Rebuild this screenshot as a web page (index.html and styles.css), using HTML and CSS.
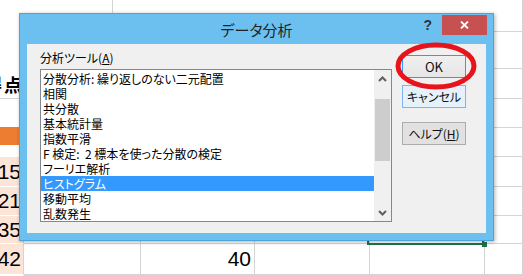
FILE: index.html
```html
<!DOCTYPE html>
<html lang="ja">
<head>
  <meta charset="UTF-8" />
  <title>データ分析</title>
  <link rel="stylesheet" href="styles.css">
</head>
<body>
  <div class="sheet">
    <div class="grid">
      <div class="c a"></div>
      <div class="c wide"><div class="seg"></div></div>
      <div class="c"></div>

      <div class="c a"></div><div class="c"></div><div class="c"></div><div class="c"></div><div class="c"></div><div class="c"></div>
      <div class="c a name">得点</div><div class="c"></div><div class="c"></div><div class="c"></div><div class="c"></div><div class="c"></div>
      <div class="c a"></div><div class="c"></div><div class="c"></div><div class="c"></div><div class="c"></div><div class="c"></div>
      <div class="c a head"><div class="fill"></div></div><div class="c"></div><div class="c"></div><div class="c"></div><div class="c"></div><div class="c"></div>
      <div class="c a num">15</div><div class="c"></div><div class="c"></div><div class="c"></div><div class="c"></div><div class="c"></div>
      <div class="c a num">21</div><div class="c"></div><div class="c"></div><div class="c"></div><div class="c"></div><div class="c"></div>
      <div class="c a num">35</div><div class="c"></div><div class="c"></div><div class="c"></div><div class="c"></div><div class="c"></div>
      <div class="c a num">42</div><div class="c"></div><div class="c val">40</div><div class="c"></div><div class="c"></div><div class="c"></div>
      <div class="c a num"></div><div class="c"></div><div class="c"></div><div class="c"></div><div class="c"></div><div class="c"></div>
    </div>

    <div class="selection"></div>
    <div class="handle"></div>

    <div class="dialog">
      <div class="titlebar">
        <span class="title">データ分析</span>
        <div class="controls">
          <span class="help-mark">?</span>
          <span class="close">
            <svg width="9" height="8" viewBox="0 0 9 8"><path d="M1 0.5 L8 7.5 M8 0.5 L1 7.5" stroke="#fff" stroke-width="1.8" fill="none"/></svg>
          </span>
        </div>
      </div>
      <div class="body">
        <div class="tools">
          <div class="label">分析ツール(<u>A</u>)</div>
          <div class="listbox">
            <ul class="items">
              <li>分散分析: 繰り返しのない二元配置</li>
              <li>相関</li>
              <li>共分散</li>
              <li>基本統計量</li>
              <li>指数平滑</li>
              <li>F 検定:&nbsp; 2 標本を使った分散の検定</li>
              <li>フーリエ解析</li>
              <li class="selected">ヒストグラム</li>
              <li>移動平均</li>
              <li>乱数発生</li>
              <li>順位と百分位数</li>
            </ul>
            <div class="scrollbar">
              <div class="arrow">
                <svg width="9" height="6" viewBox="0 0 9 6"><path d="M1 5 L4.5 1.5 L8 5" stroke="#606060" stroke-width="2" fill="none"/></svg>
              </div>
              <div class="track"><div class="thumb"></div></div>
              <div class="arrow">
                <svg width="9" height="6" viewBox="0 0 9 6"><path d="M1 1 L4.5 4.5 L8 1" stroke="#606060" stroke-width="2" fill="none"/></svg>
              </div>
            </div>
          </div>
        </div>
        <div class="buttons">
          <button class="btn ok">OK</button>
          <button class="btn cancel">キャンセル</button>
          <button class="btn help">ヘルプ(<u>H</u>)</button>
        </div>
      </div>
    </div>

    <svg class="mark" width="83" height="49" viewBox="0 0 83 49">
      <ellipse cx="41" cy="24" rx="38" ry="21" stroke="#e8141c" stroke-width="5" fill="none"/>
    </svg>
  </div>
</body>
</html>
```

FILE: styles.css
```css
* {
  box-sizing: border-box;
}
body {
  margin: 0;
  width: 523px;
  height: 276px;
  overflow: hidden;
  background: #fff;
  font-family: "Liberation Sans", Arial, sans-serif;
}
.sheet {
  position: relative;
  width: 523px;
  height: 276px;
  overflow: hidden;
}

/* spreadsheet behind the dialog */
.grid {
  display: grid;
  grid-template-columns: 24px 117px 114px 115px 115px 1fr;
  grid-template-rows: 32px 37px 30px 29px 29px 30px 29px 28px 31px 1fr;
  height: 276px;
}
.c {
  border-right: 1px solid #d4d4d4;
  border-bottom: 1px solid #d4d4d4;
}
.wide {
  grid-column: span 4;
  border: none;
}
.wide .seg {
  width: 89px;
  height: 14px;
  border-right: 1px solid #d4d4d4;
}
.a {
  border: none;
}
.name {
  display: flex;
  justify-content: flex-end;
  align-items: center;
  white-space: nowrap;
  letter-spacing: 2px;
  border-bottom: 1px solid #d4d4d4;
  font-family: "Noto Sans CJK JP", sans-serif;
  font-weight: bold;
  font-size: 18px;
}
.head .fill {
  height: 18px;
  margin-top: -1px;
  background: #ed7d31;
}
.num {
  display: flex;
  justify-content: flex-end;
  align-items: center;
  padding-right: 2px;
  background: #fce4d6;
  border-right: 1px solid #d4d4d4;
  border-bottom: 1px solid #fff;
  font-size: 21px;
}
.val {
  display: flex;
  justify-content: flex-end;
  align-items: center;
  padding-right: 3px;
  font-size: 21px;
}
.selection {
  position: absolute;
  left: 367px;
  top: 150px;
  width: 117px;
  height: 95px;
  border: 2px solid #217346;
  z-index: 1;
}
.handle {
  position: absolute;
  left: 482px;
  top: 242px;
  width: 5px;
  height: 5px;
  background: #217346;
  z-index: 1;
}

/* dialog window */
.dialog {
  position: absolute;
  left: 19px;
  top: 13px;
  width: 475px;
  height: 228px;
  background: #6bc0f0;
  border: 1px solid #4ea3d9;
  box-shadow: 1px 1px 4px rgba(0,0,0,0.3);
  z-index: 2;
  display: flex;
  flex-direction: column;
  font-family: "Noto Sans CJK JP", sans-serif;
  font-feature-settings: "palt";
}
.titlebar {
  display: grid;
  grid-template-columns: 1fr auto 1fr;
  height: 30px;
}
.title {
  grid-column: 2;
  font-size: 15px;
  line-height: 30px;
  padding-top: 1px;
  color: #222;
}
.controls {
  grid-column: 3;
  justify-self: end;
  display: flex;
  align-items: center;
  height: 20px;
  margin-top: 1px;
  margin-right: 6px;
}
.help-mark {
  font-family: "Liberation Sans", Arial, sans-serif;
  font-weight: bold;
  font-size: 14px;
  color: #333;
  margin-right: 10px;
}
.close {
  width: 45px;
  height: 20px;
  background: #c75050;
  display: flex;
  align-items: center;
  justify-content: center;
}
.body {
  flex: 1;
  margin: 0 7px 7px;
  background: #f0f0f0;
  display: flex;
  padding: 0 20px 0 13px;
}
.label {
  margin-top: 6px;
  margin-bottom: 4px;
  font-size: 12px;
  line-height: 15px;
  color: #000;
}
.listbox {
  width: 352px;
  height: 153px;
  border: 1px solid #828790;
  background: #fff;
  display: flex;
}
.items {
  list-style: none;
  margin: 0;
  padding: 1px 0 0;
  flex: 1;
  overflow: hidden;
}
.items li {
  height: 15px;
  line-height: 15px;
  padding-left: 2px;
  font-size: 12px;
  color: #000;
  white-space: nowrap;
}
.items li.selected {
  background: #3399ff;
  color: #fff;
  outline: 1px dotted #c8783c;
  outline-offset: -1px;
}
.scrollbar {
  width: 17px;
  background: #f0f0f0;
  display: flex;
  flex-direction: column;
}
.arrow {
  height: 17px;
  display: flex;
  align-items: center;
  justify-content: center;
}
.track {
  flex: 1;
  padding: 12px 1px 0;
}
.thumb {
  height: 62px;
  background: #cdcdcd;
}
.buttons {
  width: 65px;
  margin-left: 10px;
  display: flex;
  flex-direction: column;
}
.btn {
  height: 23px;
  padding: 0;
  font-family: "Noto Sans CJK JP", sans-serif;
  font-feature-settings: "palt";
  font-size: 12px;
  color: #111;
  border: 1px solid #adadad;
  background: #e1e1e1;
}
.ok {
  margin-top: 11px;
  border-color: #3399ff;
  background: linear-gradient(#f0f0f0, #e5e5e5);
  font-size: 13px;
}
.cancel {
  margin-top: 7px;
  border-color: #7eb4ea;
  background: #e5f1fb;
}
.help {
  margin-top: 14px;
}
.mark {
  position: absolute;
  left: 395px;
  top: 42px;
  z-index: 3;
}
```
